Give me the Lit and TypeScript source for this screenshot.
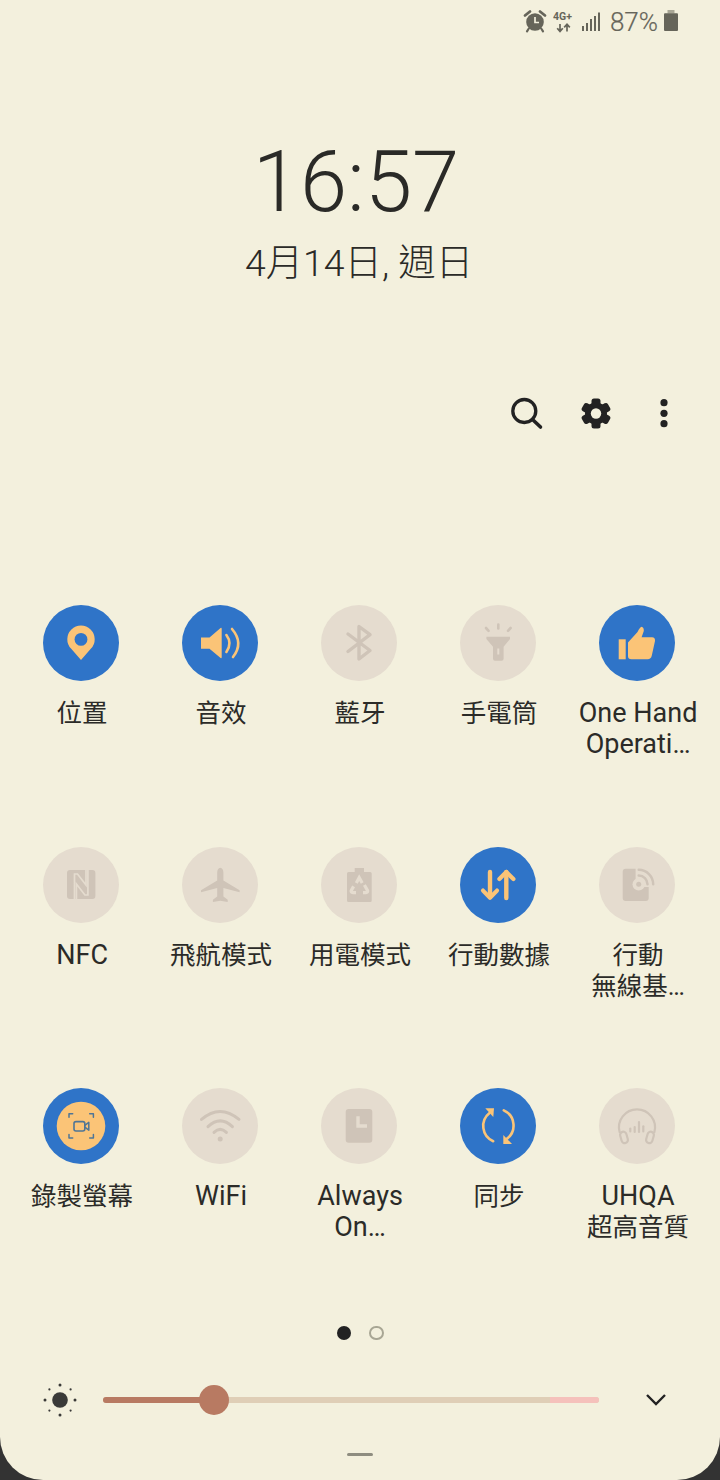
import { LitElement, html, css, svg } from "lit";
import { customElement } from "lit/decorators.js";

const line = (d: string, w = 3) =>
  svg`<path d=${d} fill="none" stroke="currentColor" stroke-width=${w} stroke-linecap="round" stroke-linejoin="round"/>`;
const cut = (d: string, w = 3) =>
  svg`<path d=${d} fill="none" stroke="var(--hole)" stroke-width=${w} stroke-linecap="butt" stroke-linejoin="miter"/>`;
const fill = (d: string) => svg`<path d=${d} fill="currentColor"/>`;
const hole = (d: string) => svg`<path d=${d} fill="var(--hole)"/>`;

interface Tile { label: string[]; on?: boolean; icon: unknown; }

const tiles: Tile[] = [
  { label: ["位置"], on: true, icon: svg`
    ${fill("M38 55 L28 43.6 A13.7 13.7 0 1 1 48 43.6 Z")}
    <circle cx="38" cy="34.4" r="6.4" fill="var(--hole)"/>` },
  { label: ["音效"], on: true, icon: svg`
    ${fill("M19 32.5 H27.5 L38 23.4 Q39.7 22 39.7 24 V52 Q39.7 54 38 52.6 L27.5 43.7 H19 Z")}
    ${line("M44.4 30 Q50.6 38.4 44.4 47", 2.6)}
    ${line("M50 24 Q62 38 51 52", 2.6)}` },
  { label: ["藍牙"], icon: line("M27 29 L49 45.5 L38 54 V21.5 L49 29.7 L27 46.5", 3.4) },
  { label: ["手電筒"], icon: svg`
    ${fill("M26.4 31.7 H50 V34 L43.6 41.8 V53.7 Q43.6 55.7 41.6 55.7 H35 Q33 55.7 33 53.7 V41.8 L26.4 34 Z")}
    ${hole("M37.3 43.5 h2 v6 h-2 z")}
    ${line("M38.3 19.5 V23.5", 2.6)}
    ${line("M26 23 L28.6 25.8", 2.6)}
    ${line("M50.6 23 L48 25.8", 2.6)}` },
  { label: ["One Hand", "Operati…"], on: true, icon: svg`
    ${fill("M19.7 34.3 H26.7 V54.3 H19.7 Z")}
    ${fill("M29 37.5 L38.5 27 Q41 22 42.5 21.7 Q45 22 44.8 26 L42.6 32.3 H53 Q56.4 32.5 56 36 L52.8 50.5 Q52 54.3 48.6 54.3 H32.4 Q29 54.3 29 51 Z")}` },

  { label: ["NFC"], icon: svg`
    ${fill("M27 23 H49.4 Q52.4 23 52.4 26 V49 Q52.4 52 49.4 52 H27 Q24 52 24 49 V26 Q24 23 27 23 Z")}
    ${cut("M31.5 52 V27 H34.5 L43 38 V23", 1.7)}
    ${cut("M44.9 23 V48 H41.9 L33.4 37 V52", 1.7)}` },
  { label: ["飛航模式"], icon: fill("M38.3 20.7 C40.2 20.7 41.4 23 41.4 25.4 V33.4 L57.6 43.2 V45.3 L41.4 41 V49.4 L45.7 52.7 V55 L38.3 53.7 L30.9 55 V52.7 L35.2 49.4 V41 L19 45.3 V43.2 L35.2 33.4 V25.4 C35.2 23 36.4 20.7 38.3 20.7 Z") },
  { label: ["用電模式"], icon: svg`
    ${fill("M33.7 21 H43 V25 H49.2 Q50.7 25 50.7 26.5 V53.5 Q50.7 55 49.2 55 H27.5 Q26 55 26 53.5 V26.5 Q26 25 27.5 25 H33.7 Z")}
    ${cut("M35.3 36 L38.2 30.6 L41.2 36", 3.2)}
    ${cut("M43.4 38 L46.6 43.6 Q47 45.6 45 45.6 H42", 3.2)}
    ${cut("M35 45.6 H31.8 Q29.8 45.6 30.2 43.6 L32.6 39.4", 3.2)}` },
  { label: ["行動數據"], on: true, icon: svg`
    ${line("M30 25 V50", 4.4)}
    ${line("M23 43.6 L30 50.8 L37 43.6", 4.2)}
    ${line("M46.3 25 V51", 4.4)}
    ${line("M39.4 32 L46.3 25 L53.4 32", 4.2)}` },
  { label: ["行動", "無線基…"], icon: svg`
    ${fill("M26.7 21.7 H46.7 Q49.7 21.7 49.7 24.7 V51 Q49.7 54 46.7 54 H26.7 Q23.7 54 23.7 51 V24.7 Q23.7 21.7 26.7 21.7 Z")}
    ${hole("M36.6 20 H52 V40 H36.6 Z")}
    <circle cx="39.7" cy="37.3" r="6.2" fill="var(--hole)"/>
    <circle cx="39.7" cy="37.3" r="2.5" fill="currentColor"/>
    ${line("M39.7 28.5 A8.8 8.8 0 0 1 48.5 37.3", 2.5)}
    ${line("M39.7 22.8 A14.5 14.5 0 0 1 54.2 37.3", 2.5)}` },

  { label: ["錄製螢幕"], on: true, icon: svg`
    <circle cx="38" cy="38" r="24.3" fill="currentColor"/>
    <g class="rec">
      ${line("M26 29.3 V25.7 H29.7", 1.5)}
      ${line("M46.7 25.7 H50.4 V29.3", 1.5)}
      ${line("M26 46.5 V50.1 H29.7", 1.5)}
      ${line("M46.7 50.1 H50.4 V46.5", 1.5)}
      <rect x="31" y="33.6" width="10.8" height="9.4" rx="2" fill="none" stroke="currentColor" stroke-width="1.6"/>
      ${line("M41.8 37.4 L45.8 34.4 V42.2 L41.8 39.2", 1.5)}
    </g>` },
  { label: ["WiFi"], icon: svg`
    ${line("M19.5 31.4 Q38 15.5 57 31.4", 3)}
    ${line("M26 38.6 Q38.2 27 50.4 38.6", 3)}
    ${line("M32 44.4 Q38.2 38.4 44.4 44.4", 3)}
    <circle cx="38.2" cy="51" r="2.5" fill="currentColor"/>` },
  { label: ["Always", "On…"], icon: svg`
    ${fill("M27.7 21 H48.3 Q51.3 21 51.3 24 V51.7 Q51.3 54.7 48.3 54.7 H27.7 Q24.7 54.7 24.7 51.7 V24 Q24.7 21 27.7 21 Z")}
    ${hole("M35.3 28.3 H38.7 V36.3 H46 V39.7 H35.3 Z")}` },
  { label: ["同步"], on: true, icon: svg`
    ${line("M33.2 53.2 A16.6 16.6 0 0 1 29.5 25", 2.6)}
    ${fill("M25.3 20.3 H34 L33.3 29 Z")}
    ${line("M43.8 22.4 A16.6 16.6 0 0 1 46.6 51", 2.6)}
    ${fill("M43.3 47 L43.3 56 H52 Z")}` },
  { label: ["UHQA", "超高音質"], icon: svg`
    ${line("M20.6 44 A18 18 0 1 1 55.4 44", 2.2)}
    <rect x="21.8" y="43.6" width="6.4" height="11.6" rx="3.2" transform="rotate(-16 25 49.4)" fill="none" stroke="currentColor" stroke-width="2.2"/>
    <rect x="47.8" y="43.6" width="6.4" height="11.6" rx="3.2" transform="rotate(16 51 49.4)" fill="none" stroke="currentColor" stroke-width="2.2"/>
    ${line("M31.3 40.6 V43.4", 2.2)}
    ${line("M35.7 39 V44", 2.2)}
    ${line("M40 34 V44", 2.2)}
    ${line("M44.3 38.3 V43.4", 2.2)}` },
];

const isLatin = (s: string) => /^[\x00-\x7f…]+$/.test(s);

@customElement("app-root")
export class AppRoot extends LitElement {
  static styles = css`
    :host { display: block; width: 720px; height: 1480px; background: #333; overflow: hidden;
      font-family: Roboto, "Noto Sans CJK TC", sans-serif; }
    .panel { height: 1480px; background: #f3f0dd; border-radius: 0 0 43px 43px; display: flex; flex-direction: column; }

    .status { height: 42px; display: flex; justify-content: flex-end; align-items: flex-start; padding-top: 8px;
      padding-right: 42px; box-sizing: border-box; color: #66655a; }
    .status svg { display: block; }
    .st-4g { width: 20px; height: 26px; margin-left: 6px; }
    .st-sig { width: 18px; height: 26px; margin-left: 9px; }
    .st-pct { font-size: 26px; font-weight: 300; line-height: 28px; margin-left: 10px; -webkit-text-stroke: .2px #66655a; }
    .st-bat { width: 14px; height: 26px; margin-left: 6px; }
    .st-4g text { font: 700 10.5px Roboto, sans-serif; fill: currentColor; }

    .clock { margin-top: 90px; padding-right: 8px; text-align: center; font-size: 85px; font-weight: 300; line-height: 100px; color: #2a2a27; }
    .date { margin-top: 8px; padding-right: 2px; text-align: center; font-size: 37.4px; font-weight: 300; line-height: 46px; color: #2a2a27; }

    .actions { margin-top: 107px; display: flex; justify-content: flex-end; padding-right: 22px; color: #222; }
    .actions svg { display: block; width: 68px; height: 40px; }

    .grid { margin-top: 172px; padding-left: 11.6px; display: grid; grid-template-columns: repeat(5, 139px); grid-template-rows: 242px 241px 235px; }
    .tile { display: flex; flex-direction: column; align-items: center; }
    .disc { width: 76px; height: 76px; border-radius: 50%; background: #e5dccf; color: #cfc4b8; --hole: #e5dccf; flex: none; }
    .disc.on { background: #2f74c8; color: #fbc477; --hole: #2f74c8; }
    .disc svg { display: block; width: 76px; height: 76px; }
    .rec { color: #4f7596; }
    .label { margin-top: 17px; padding-left: 2px; text-align: center; font-size: 25.5px; line-height: 31px; color: #2b2b28; white-space: nowrap; }
    .label .lat { font-size: 27px; }
    .label .ln { display: block; height: 31px; }

    .pager { height: 20px; display: flex; justify-content: center; align-items: center; gap: 18px; }
    .dot { width: 14.5px; height: 14.5px; border-radius: 50%; background: #222; box-sizing: border-box; }
    .dot.off { background: transparent; border: 2.5px solid #a8a694; }

    .bright { margin-top: 40px; height: 34px; display: flex; align-items: center; padding-left: 40px; }
    .sun { width: 40px; height: 40px; flex: none; color: #3a3a38; display: block; }
    .track { position: relative; margin-left: 23px; width: 496px; height: 5.4px; border-radius: 3px; background: #dfceb6; }
    .track .fill { position: absolute; left: 0; top: 0; bottom: 0; width: 110px; background: #b87a62; border-radius: 3px 0 0 3px; }
    .track .hot { position: absolute; right: 0; top: 0; bottom: 0; width: 49px; background: #f5c1bb; border-radius: 0 3px 3px 0; }
    .track .thumb { position: absolute; left: 96px; top: -12.3px; width: 30px; height: 30px; border-radius: 50%; background: #b87a62; }
    .chev { margin-left: 44px; width: 26px; height: 16px; display: block; color: #222; }
    .handle { margin: 36px auto 0; width: 26px; height: 3.4px; border-radius: 2px; background: #8e8d80; }
  `;

  render() {
    const sunDots = Array.from({ length: 8 }, (_, i) => {
      const a = (i * Math.PI) / 4;
      return svg`<circle cx=${20 + 15 * Math.cos(a)} cy=${20 + 15 * Math.sin(a)} r=${i % 2 ? 1.1 : 1.5} fill="currentColor"/>`;
    });
    return html`<div class="panel">
      <div class="status">
        <svg width="24" height="26" viewBox="0 0 24 26" fill="none" stroke="currentColor">
          <circle cx="12" cy="14" r="8.8" fill="currentColor" stroke="none"/>
          <path d="M12 9 V14.5 H16" stroke="#f3f0dd" stroke-width="1.7"/>
          <path d="M2 7.5 L7 3.5 M22 7.5 L17 3.5" stroke-width="2.8" stroke-linecap="round"/>
          <path d="M5.5 21 L4 23.4 M18.5 21 L20 23.4" stroke-width="2.2" stroke-linecap="round"/>
        </svg>
        <svg class="st-4g" viewBox="0 0 20 26">
          <text x="0" y="12">4G+</text>
          <path d="M7 16 V23 M4.2 20.2 L7 23.4 L9.8 20.2 M14 23.6 V16.4 M11.2 19.4 L14 16.2 L16.8 19.4" fill="none" stroke="currentColor" stroke-width="1.7"/>
        </svg>
        <svg class="st-sig" viewBox="0 0 18 26" fill="currentColor">
          <rect x="0" y="18" width="2" height="5"/><rect x="4" y="15" width="2" height="8"/>
          <rect x="8" y="11" width="2" height="12"/><rect x="12" y="8" width="2" height="15"/>
          <rect x="16" y="4.500" width="2" height="18.500"/>
        </svg>
        <div class="st-pct">87%</div>
        <svg class="st-bat" viewBox="0 0 14 26" fill="currentColor">
          <rect x="3.500" y="2" width="7" height="3.400" fill="#a9a796"/>
          <rect x="0" y="5.300" width="14" height="17.700" rx="1"/>
        </svg>
      </div>

      <div class="clock">16:57</div>
      <div class="date">4月14日, 週日</div>

      <div class="actions">
        <svg viewBox="0 0 68 40" fill="none" stroke="currentColor">
          <circle cx="30.300" cy="18" r="11.500" stroke-width="3.300"/>
          <path d="M38.500 26.500 L46.500 34" stroke-width="3.600" stroke-linecap="round"/>
        </svg>
        <svg viewBox="0 0 68 40">
          <g fill="currentColor">
            <circle cx="34" cy="20.500" r="11"/>
            <rect x="29.500" y="5.500" width="9" height="30" rx="2.500"/>
            <rect x="29.500" y="5.500" width="9" height="30" rx="2.500" transform="rotate(60 34 20.500)"/>
            <rect x="29.500" y="5.500" width="9" height="30" rx="2.500" transform="rotate(120 34 20.500)"/>
          </g>
          <circle cx="34" cy="20.500" r="5.200" fill="#f3f0dd"/>
        </svg>
        <svg viewBox="0 0 68 40" fill="currentColor">
          <circle cx="34" cy="9.700" r="3.600"/><circle cx="34" cy="20.300" r="3.600"/><circle cx="34" cy="30.700" r="3.600"/>
        </svg>
      </div>

      <div class="grid">
        ${tiles.map(
          (t) => html`<div class="tile">
            <div class="disc ${t.on ? "on" : ""}"><svg viewBox="0 0 76 76">${t.icon}</svg></div>
            <div class="label">${t.label.map((l) => html`<span class="ln ${isLatin(l) ? "lat" : ""}">${l}</span>`)}</div>
          </div>`
        )}
      </div>

      <div class="pager"><div class="dot"></div><div class="dot off"></div></div>

      <div class="bright">
        <svg class="sun" viewBox="0 0 40 40"><circle cx="20" cy="20" r="7.800" fill="currentColor"/>${sunDots}</svg>
        <div class="track">
          <div class="fill"></div><div class="hot"></div><div class="thumb"></div>
        </div>
        <svg class="chev" viewBox="0 0 26 16"><path d="M4 3 L13 12 L22 3" fill="none" stroke="currentColor" stroke-width="2.400"/></svg>
      </div>
      <div class="handle"></div>
    </div>`;
  }
}
